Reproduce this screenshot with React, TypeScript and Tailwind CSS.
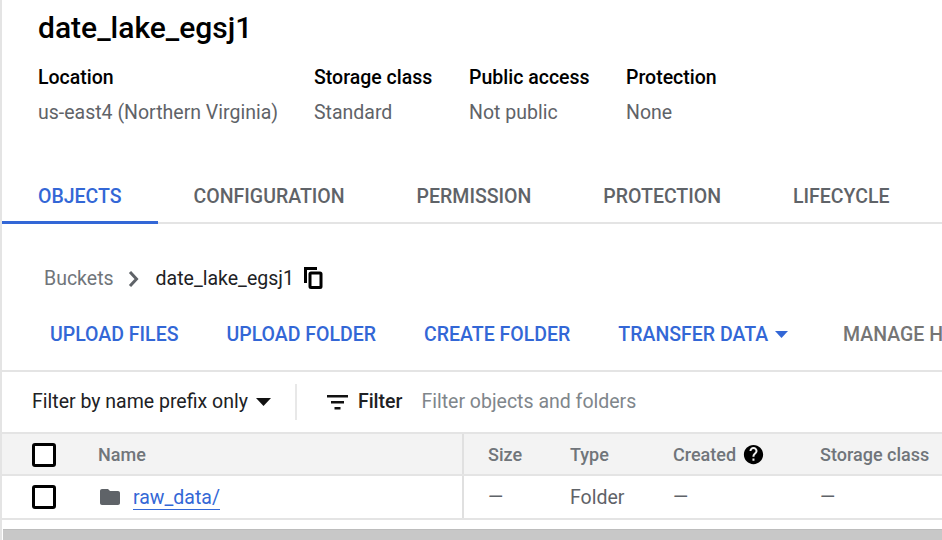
import React from "react";

const tabs = ["OBJECTS", "CONFIGURATION", "PERMISSION", "PROTECTION", "LIFECYCLE"];
const meta = [
  { label: "Location", value: "us-east4 (Northern Virginia)", w: "w-[276px]" },
  { label: "Storage class", value: "Standard", w: "w-[155px]" },
  { label: "Public access", value: "Not public", w: "w-[157px]" },
  { label: "Protection", value: "None", w: "w-[120px]" },
];

function Checkbox() {
  return <div className="w-6 h-6 rounded-[3px] border-[3px] border-black bg-white shrink-0" />;
}

export default function App() {
  return (
    <div className="w-[942px] h-[540px] overflow-hidden bg-white border-l-2 border-[#e4e4e4] flex flex-col font-['Roboto',sans-serif] text-[19.5px] relative">
      <div className="pl-9 pt-[9px]">
        <h1 className="text-[30px] leading-[38px] font-medium text-black">date_lake_egsj1</h1>
        <div className="flex mt-[19px]">
          {meta.map((m) => (
            <div key={m.label} className={m.w}>
              <div className="leading-[24px] font-medium text-black">{m.label}</div>
              <div className="leading-[24px] mt-[11px] text-[#5f6368]">{m.value}</div>
            </div>
          ))}
        </div>
      </div>
      <div className="flex mt-[46px] h-[53px] border-b-2 border-[#e4e4e4] shrink-0">
        {tabs.map((t, i) => (
          <div key={t} className={`h-[53px] px-9 flex items-center font-medium whitespace-nowrap ${i === 0 ? "text-[#3367d6] border-b-[3px] border-[#3367d6] pt-[2px]" : "text-[#5f6368] pb-[1px]"}`}>
            {t}
          </div>
        ))}
      </div>
      <div className="flex items-center h-[28px] mt-[41px] pl-[42px] shrink-0">
        <span className="text-[#70757a]">Buckets</span>
        <svg width="14" height="18" viewBox="0 0 14 18" className="ml-[13px] mr-[15px] shrink-0" fill="none" stroke="#5f6368" strokeWidth="3"><path d="M3 2l6.500 7L3 16" /></svg>
        <span className="text-[#202124]">date_lake_egsj1</span>
        <svg width="19" height="22" viewBox="0 0 19 22" className="ml-[10px] -mt-[2px] shrink-0" fill="none" stroke="#000" strokeWidth="3"><path d="M1.500 16V1.500H13" /><rect x="6" y="6" width="11" height="14.500" rx="1" /></svg>
      </div>
      <div className="flex items-center h-[72px] border-b-2 border-[#e4e4e4] font-medium whitespace-nowrap pl-[48px] pb-[1px] mt-[7px] shrink-0 overflow-hidden">
        <span className="text-[#3367d6] shrink-0">UPLOAD FILES</span>
        <span className="text-[#3367d6] ml-12 shrink-0">UPLOAD FOLDER</span>
        <span className="text-[#3367d6] ml-12 shrink-0">CREATE FOLDER</span>
        <span className="text-[#3367d6] ml-12 shrink-0">TRANSFER DATA</span>
        <svg width="13" height="7" viewBox="0 0 13 7" className="ml-[7px] shrink-0" fill="#3367d6"><path d="M0 0h13L6.500 7z" /></svg>
        <span className="text-[#757575] ml-[55px] shrink-0">MANAGE HOLDS</span>
      </div>
      <div className="flex items-center h-[60px] shrink-0 pl-[30px] whitespace-nowrap">
        <span className="text-[#202124]">Filter by name prefix only</span>
        <svg width="15" height="8" viewBox="0 0 15 8" className="ml-[8px] shrink-0" fill="#111"><path d="M0 0h15L7.500 8z" /></svg>
        <div className="w-[2px] h-9 bg-[#e8e8e8] ml-[24px]" />
        <svg width="21" height="16" viewBox="0 0 21 16" className="ml-[30px] shrink-0" fill="#111"><path d="M0 1h21v2.500H0zM4 7h13v2.500H4zM7.500 13h6v2.500h-6z" /></svg>
        <span className="ml-[10px] font-medium text-[#202124]">Filter</span>
        <span className="ml-[19px] text-[#80868b]">Filter objects and folders</span>
      </div>
      <div className="flex items-center h-[44px] bg-[#f3f3f3] border-y-2 border-[#e4e4e4] shrink-0 font-medium text-[18px] text-[#70757a] whitespace-nowrap">
        <div className="flex items-center w-[462px] h-full border-r-2 border-[#e0e0e0] pl-[30px] pt-[1px]">
          <Checkbox />
          <span className="ml-[42px] -mt-[1px]">Name</span>
        </div>
        <span className="ml-6 w-[82px]">Size</span>
        <span className="w-[103px]">Type</span>
        <span>Created</span>
        <svg width="21" height="21" viewBox="0 0 24 24" className="ml-[7px] shrink-0" fill="#000"><path d="M12 1C5.900 1 1 5.900 1 12s4.900 11 11 11 11-4.900 11-11S18.100 1 12 1zm1.100 18h-2.300v-2.300h2.300V19zm2.400-8.400-1 1c-.9.900-1.400 1.500-1.400 3h-2.300v-.6c0-1.200.5-2.300 1.400-3.100l1.400-1.400c.4-.4.700-1 .7-1.600 0-1.300-1-2.300-2.300-2.300S9.700 6.600 9.700 7.900H7.400c0-2.500 2.100-4.600 4.600-4.600s4.600 2.100 4.600 4.600c0 1-.5 2-1.100 2.700z" /></svg>
        <span className="ml-[56px]">Storage class</span>
      </div>
      <div className="flex items-center h-[44px] border-b-2 border-[#e4e4e4] shrink-0 text-[#5f6368] whitespace-nowrap">
        <div className="flex items-center w-[462px] h-full border-r-2 border-[#e0e0e0] pl-[30px]">
          <Checkbox />
          <svg width="24" height="24" viewBox="0 0 24 24" className="ml-[42px] shrink-0" fill="#5f6368"><path d="M10 4H4c-1.100 0-2 .9-2 2v12c0 1.100.9 2 2 2h16c1.100 0 2-.9 2-2V8c0-1.100-.9-2-2-2h-8l-2-2z" /></svg>
          <span className="ml-[11px] text-[#3367d6] border-b border-[#3367d6] leading-[22px] mt-[2px]">raw_data/</span>
        </div>
        <span className="ml-6 w-[82px] pt-[2px]">—</span>
        <span className="w-[103px] pt-[2px]">Folder</span>
        <span className="w-[147px] pt-[2px]">—</span>
        <span className="pt-[2px]">—</span>
      </div>
      <div className="absolute left-[1px] right-0 top-[529px] h-[11px] bg-[#c8c8c8] border-t border-[#bdbdbd]" />
    </div>
  );
}
